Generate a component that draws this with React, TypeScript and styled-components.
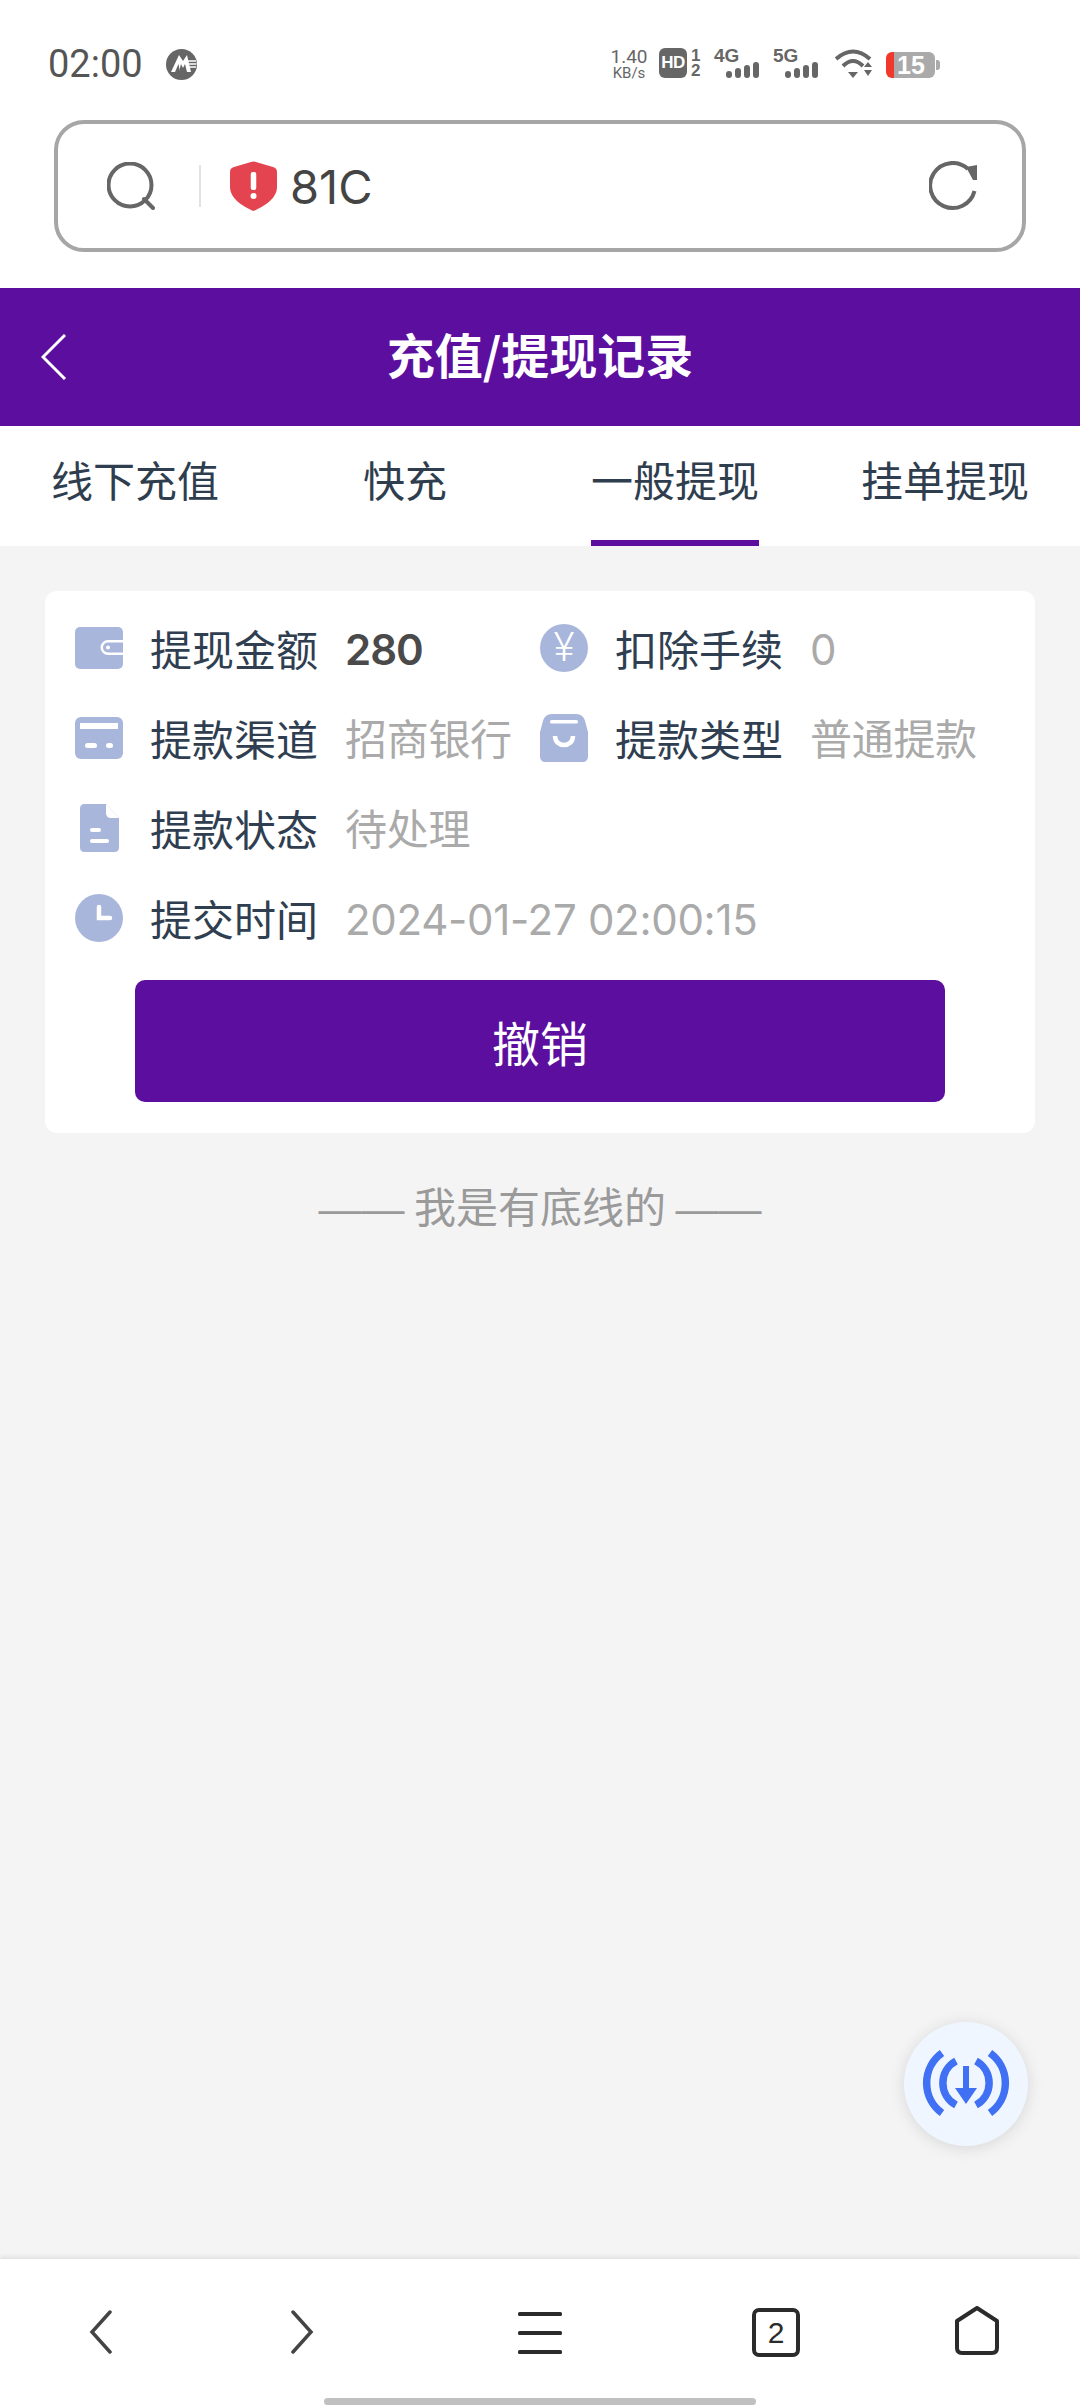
import styled, { createGlobalStyle } from 'styled-components';

const CJK = `"Noto Sans CJK SC", "Noto Sans", sans-serif`;
const NUM = `Inter, "Noto Sans CJK SC", sans-serif`;
const ICON_BLUE = '#a9b6dc';
const PURPLE = '#5c0f9e';

const GlobalStyle = createGlobalStyle`
  html, body {
    margin: 0;
    padding: 0;
    background: #f4f4f5;
  }
  * {
    box-sizing: border-box;
  }
`;

const Page = styled.div`
  width: 1080px;
  height: 2408px;
  display: flex;
  flex-direction: column;
  overflow: hidden;
  font-family: ${CJK};
`;

const StatusBar = styled.div`
  height: 120px;
  flex: none;
  background: #fff;
  padding: 48px 0 0 48px;
  display: flex;
  justify-content: space-between;
  align-items: flex-start;
`;

const StatusLeft = styled.div`
  display: flex;
  align-items: center;
  height: 32px;
  gap: 23px;
`;

const Clock = styled.span`
  font-family: Roboto, sans-serif;
  font-size: 38px;
  line-height: 32px;
  color: #555;
`;

const StatusRight = styled.div`
  display: flex;
  align-items: flex-start;
  height: 32px;
  width: 470px;
`;

const Speed = styled.div`
  width: 38px;
  display: flex;
  flex-direction: column;
  align-items: center;
  color: #666;
  font-family: Roboto, sans-serif;
  margin-right: 11px;
`;

const SpeedValue = styled.span`
  font-size: 19px;
  line-height: 18px;
`;

const SpeedUnit = styled.span`
  font-size: 15px;
  line-height: 14px;
`;

const HdBadge = styled.div`
  width: 28px;
  height: 30px;
  border-radius: 6px;
  background: #666;
  color: #fff;
  font: 700 17px/30px "Liberation Sans", sans-serif;
  letter-spacing: -0.5px;
  text-align: center;
`;

const SimSlots = styled.div`
  width: 11px;
  margin-left: 4px;
  color: #666;
  font: 700 17px/15px "Liberation Sans", sans-serif;
  display: flex;
  flex-direction: column;
`;

const Signal = styled.div`
  position: relative;
  width: 47px;
  height: 30px;
  margin-left: 12px;
`;

const SignalLabel = styled.span`
  position: absolute;
  left: 0;
  top: -1px;
  color: #666;
  font: 700 19px/18px "Liberation Sans", sans-serif;
`;

const SignalBars = styled.svg`
  position: absolute;
  left: 12px;
  top: 14px;
`;

const Battery = styled.div`
  position: relative;
  width: 49px;
  height: 26px;
  margin-top: 4px;
  margin-left: 14px;
  border-radius: 6px;
  background: linear-gradient(to right, #f0392b 8px, #aaa 8px);
  color: #fff;
  font: 700 25px/26px "Liberation Sans", sans-serif;
  padding-left: 11px;

  &::after {
    content: '';
    position: absolute;
    right: -5px;
    top: 8px;
    width: 4px;
    height: 10px;
    border-radius: 0 3px 3px 0;
    background: #aaa;
  }
`;

const AddressWrap = styled.div`
  height: 168px;
  flex: none;
  padding: 0 54px 36px;
  background: #fff;
`;

const AddressBar = styled.div`
  height: 132px;
  border: 4px solid #a6a6a6;
  border-radius: 30px;
  display: flex;
  align-items: center;
  padding-left: 49px;
  padding-right: 45px;
`;

const Divider = styled.div`
  width: 2px;
  height: 42px;
  margin: 0 29px 0 44px;
  background: #e2e2e2;
`;

const AddressText = styled.span`
  margin-left: 13px;
  padding-top: 2px;
  flex: 1;
  font-family: ${NUM};
  font-size: 47px;
  line-height: 50px;
  color: #444;
`;

const TitleBar = styled.header`
  position: relative;
  height: 138px;
  flex: none;
  padding-bottom: 9px;
  background: ${PURPLE};
  display: flex;
  align-items: center;
  justify-content: center;
  color: #fff;
`;

const BackLink = styled.svg`
  position: absolute;
  left: 41px;
  top: 46px;
`;

const Title = styled.h1`
  margin: 0;
  font-size: 48px;
  font-weight: 700;
  line-height: 60px;
`;

const Tabs = styled.nav`
  height: 120px;
  flex: none;
  background: #fff;
  display: grid;
  grid-template-columns: repeat(4, 270px);
`;

const Tab = styled.div`
  display: flex;
  justify-content: center;
  height: 120px;
`;

const TabLabel = styled.span<{ $active?: boolean }>`
  display: block;
  height: 120px;
  padding-top: 26px;
  font-size: 42px;
  line-height: 54px;
  color: #2f3e4e;
  border-bottom: 6px solid ${(p) => (p.$active ? PURPLE : 'transparent')};
`;

const Main = styled.main`
  position: relative;
  flex: 1;
  background: #f4f4f5;
  padding: 45px 45px 0;
`;

const Card = styled.section`
  background: #fff;
  border-radius: 12px;
  padding: 12px 30px 31px;
`;

const Fields = styled.div`
  display: grid;
  grid-template-columns: 465px 1fr;
  grid-auto-rows: 90px;
`;

const Field = styled.div<{ $wide?: boolean }>`
  display: flex;
  align-items: center;
  grid-column: ${(p) => (p.$wide ? '1 / -1' : 'auto')};
`;

const FieldIcon = styled.div`
  width: 48px;
  height: 48px;
  flex: none;
  display: flex;
  align-items: center;
  justify-content: center;
  margin-right: 27px;
`;

const YenIcon = styled.div`
  width: 48px;
  height: 48px;
  border-radius: 50%;
  background: ${ICON_BLUE};
  color: #fff;
  font: 300 40px/48px Roboto, sans-serif;
  text-align: center;
`;

const Label = styled.span`
  width: 168px;
  flex: none;
  font-size: 42px;
  line-height: 54px;
  color: #2f3e50;
`;

const Value = styled.span<{ $strong?: boolean }>`
  margin-left: 27px;
  padding-top: 3px;
  white-space: nowrap;
  font-family: ${NUM};
  font-size: 42px;
  line-height: 54px;
  letter-spacing: ${(p) => (p.$strong ? '-1px' : '-0.3px')};
  font-weight: ${(p) => (p.$strong ? 600 : 400)};
  color: ${(p) => (p.$strong ? '#4a4a4a' : '#aaa')};
`;

const CancelButton = styled.button`
  display: block;
  width: 810px;
  height: 122px;
  margin: 17px 0 0 60px;
  border: 0;
  border-radius: 10px;
  background: ${PURPLE};
  color: #fff;
  font-family: ${CJK};
  font-size: 48px;
`;

const EndNote = styled.p`
  margin: 44px 0 0;
  text-align: center;
  font-size: 42px;
  line-height: 56px;
  color: #9a9a9a;
`;

const Dash = styled.span`
  font-family: "Liberation Sans", sans-serif;
  font-size: 43px;
`;

const Fab = styled.div`
  position: absolute;
  right: 52px;
  bottom: 113px;
  width: 124px;
  height: 124px;
  border-radius: 50%;
  background: #f0f6ff;
  box-shadow: 0 2px 16px rgba(0, 0, 0, 0.12);
`;

const BottomBar = styled.footer`
  height: 149px;
  flex: none;
  background: #fff;
  box-shadow: 0 -2px 5px rgba(0, 0, 0, 0.09);
  position: relative;
  display: flex;
  flex-direction: column;
`;

const BottomIcons = styled.div`
  display: grid;
  grid-template-columns: 202px 200px 276px 196px 206px;
  height: 139px;
  padding-top: 51px;
  justify-items: center;
  align-items: start;
`;

const TabCount = styled.div`
  width: 48px;
  height: 49px;
  margin-top: -2px;
  border: 4px solid #2b2b2b;
  border-radius: 7px;
  color: #2b2b2b;
  font: 500 30px/41px "Liberation Sans", sans-serif;
  text-align: center;
`;

const HomeBar = styled.div`
  width: 432px;
  height: 7px;
  margin: 0 auto;
  border-radius: 4px;
  background: #c0c0c0;
`;

const BankLogo = () => (
  <svg width="31" height="31" viewBox="0 0 31 31">
    <circle cx="15.5" cy="15.5" r="15.5" fill="#666" />
    <path d="M5 23 L13 6 L17 12 L21 6 L25 23 H21 L19 15 L17 19 L15 15 L13 23 Z" fill="#fff" />
    <path d="M9 23 L12.5 15 L14 23 Z" fill="#666" />
    <path d="M22 12h8M23 15h7.5M23 18h7" stroke="#fff" strokeWidth="1.4" />
  </svg>
);

const Bars = () => (
  <SignalBars width="35" height="16" viewBox="0 0 35 16">
    <rect x="0" y="9" width="6" height="7" rx="3" fill="#666" />
    <rect x="9" y="6" width="6" height="10" rx="3" fill="#666" />
    <rect x="18" y="3" width="6" height="13" rx="3" fill="#666" />
    <rect x="27" y="0" width="6" height="16" rx="3" fill="#666" />
  </SignalBars>
);

const WifiIcon = () => (
  <svg width="37" height="30" viewBox="0 0 37 30" style={{ marginLeft: 15 }}>
    <path d="M1 11 Q18 -4 35 11" fill="none" stroke="#666" strokeWidth="4" />
    <path d="M8 18 Q18 8 28 18" fill="none" stroke="#666" strokeWidth="4" />
    <path d="M13 24 L23 24 L18 30 Z" fill="#666" />
    <path d="M29 19 L33 14 L37 19 Z M29 22 L37 22 L33 28 Z" fill="#666" />
  </svg>
);

const SearchIcon = () => (
  <svg width="48" height="48" viewBox="0 0 48 48" fill="none" stroke="#666" strokeWidth="4" strokeLinecap="round">
    <circle cx="23" cy="23" r="21.5" />
    <path d="M37 37 L46 46" />
  </svg>
);

const ShieldIcon = () => (
  <svg width="47" height="50" viewBox="0 0 47 50" style={{ flex: 'none' }}>
    <path
      d="M21 1 Q23.5 0 26 1 L43 6 Q47 7 47 11 V26 C47 38 33 46 23.5 50 C14 46 0 38 0 26 V11 Q0 7 4 6 Z"
      fill="#e3444f"
    />
    <rect x="20.75" y="11" width="5.5" height="18" rx="2" fill="#fff" />
    <circle cx="23.5" cy="35" r="3" fill="#fff" />
  </svg>
);

const RefreshIcon = () => (
  <svg width="48" height="50" viewBox="0 0 48 50" fill="none" stroke="#666" strokeWidth="4">
    <path d="M45.5 30 A22.5 22.5 0 1 1 39 8" />
    <path d="M37 6 L48 4 V19 H44 Z" fill="#666" stroke="none" />
  </svg>
);

const WalletIcon = () => (
  <svg width="48" height="42" viewBox="0 0 48 42">
    <rect width="48" height="42" rx="5" fill={ICON_BLUE} />
    <path d="M48 13 H33 A7.5 7.5 0 0 0 33 28 H48 Z" fill="#fff" />
    <path d="M48 15.5 H33 A5 5 0 0 0 33 25.5 H48 Z" fill={ICON_BLUE} />
    <circle cx="33" cy="20.5" r="2" fill="#fff" />
  </svg>
);

const CardIcon = () => (
  <svg width="48" height="42" viewBox="0 0 48 42">
    <rect width="48" height="42" rx="6" fill={ICON_BLUE} />
    <rect x="5" y="6" width="38" height="6" fill="#fff" />
    <rect x="10" y="26" width="12" height="5" rx="2.5" fill="#fff" />
    <rect x="31" y="26" width="7" height="5" rx="2.5" fill="#fff" />
  </svg>
);

const BagIcon = () => (
  <svg width="48" height="48" viewBox="0 0 48 48">
    <path
      d="M12 0 H36 C41 0 44 3 45 7 L48 18 V42 C48 46 46 48 42 48 H6 C2 48 0 46 0 42 V18 L3 7 C4 3 7 0 12 0 Z"
      fill={ICON_BLUE}
    />
    <rect x="10" y="6" width="28" height="3.5" rx="1.5" fill="#fff" />
    <path d="M15 22 C15 34 33 34 33 22" fill="none" stroke="#fff" strokeWidth="4.5" />
  </svg>
);

const FileIcon = () => (
  <svg width="39" height="48" viewBox="0 0 39 48">
    <path
      d="M4 0 H26 L39 14 V44 C39 46 37 48 35 48 H4 C2 48 0 46 0 44 V4 C0 2 2 0 4 0 Z"
      fill={ICON_BLUE}
    />
    <path d="M26 0 V9 C26 12 28 14 31 14 H39 Z" fill="#fff" />
    <rect x="10" y="24" width="11" height="4" rx="2" fill="#fff" />
    <rect x="10" y="35" width="19" height="4" rx="2" fill="#fff" />
  </svg>
);

const ClockIcon = () => (
  <svg width="48" height="48" viewBox="0 0 48 48">
    <circle cx="24" cy="24" r="24" fill={ICON_BLUE} />
    <path d="M24 13 V24 H35" fill="none" stroke="#fff" strokeWidth="4.5" strokeLinecap="round" />
  </svg>
);

const DownloadIcon = () => (
  <svg width="124" height="124" viewBox="0 0 124 124" fill="none" stroke="#4070f4" strokeWidth="7.5">
    <path d="M38 31 A37 37 0 0 0 38 91" />
    <path d="M86 31 A37 37 0 0 1 86 91" />
    <path d="M52 39 A25 25 0 0 0 52 83" />
    <path d="M72 39 A25 25 0 0 1 72 83" />
    <path d="M59 44 H65 V66 H73 L62 82 L51 66 H59 Z" fill="#4070f4" stroke="none" />
  </svg>
);

const Chevron = ({ flip }: { flip?: boolean }) => (
  <svg width="24" height="44" viewBox="0 0 24 44" fill="none" stroke="#444" strokeWidth="3.5" strokeLinecap="round">
    <path d={flip ? 'M3 2 L21 22 L3 42' : 'M21 2 L3 22 L21 42'} />
  </svg>
);

const MenuIcon = () => (
  <svg width="44" height="44" viewBox="0 0 44 44" fill="#2b2b2b">
    <rect x="0" y="2" width="44" height="4" rx="1.5" />
    <rect x="0" y="21" width="44" height="4" rx="1.5" />
    <rect x="0" y="40" width="44" height="4" rx="1.5" />
  </svg>
);

const HomeIcon = () => (
  <svg
    width="46"
    height="50"
    viewBox="0 0 46 50"
    fill="none"
    stroke="#2b2b2b"
    strokeWidth="4"
    strokeLinejoin="round"
    style={{ marginTop: -4 }}
  >
    <path d="M23 2 L43 15 V42 C43 46 41 47 38 47 H8 C5 47 3 46 3 42 V15 Z" />
  </svg>
);

const App = () => {
  return (
    <Page>
      <GlobalStyle />
      <StatusBar>
        <StatusLeft>
          <Clock>02:00</Clock>
          <BankLogo />
        </StatusLeft>
        <StatusRight>
          <Speed>
            <SpeedValue>1.40</SpeedValue>
            <SpeedUnit>KB/s</SpeedUnit>
          </Speed>
          <HdBadge>HD</HdBadge>
          <SimSlots>
            <span>1</span>
            <span>2</span>
          </SimSlots>
          <Signal>
            <SignalLabel>4G</SignalLabel>
            <Bars />
          </Signal>
          <Signal>
            <SignalLabel>5G</SignalLabel>
            <Bars />
          </Signal>
          <WifiIcon />
          <Battery>15</Battery>
        </StatusRight>
      </StatusBar>

      <AddressWrap>
        <AddressBar>
          <SearchIcon />
          <Divider />
          <ShieldIcon />
          <AddressText>81C</AddressText>
          <RefreshIcon />
        </AddressBar>
      </AddressWrap>

      <TitleBar>
        <BackLink width="26" height="46" viewBox="0 0 26 46" fill="none" stroke="#fff" strokeWidth="3">
          <path d="M24 1 L2 23 L24 45" />
        </BackLink>
        <Title>充值/提现记录</Title>
      </TitleBar>

      <Tabs>
        <Tab><TabLabel>线下充值</TabLabel></Tab>
        <Tab><TabLabel>快充</TabLabel></Tab>
        <Tab><TabLabel $active>一般提现</TabLabel></Tab>
        <Tab><TabLabel>挂单提现</TabLabel></Tab>
      </Tabs>

      <Main>
        <Card>
          <Fields>
            <Field>
              <FieldIcon><WalletIcon /></FieldIcon>
              <Label>提现金额</Label>
              <Value $strong>280</Value>
            </Field>
            <Field>
              <FieldIcon><YenIcon>¥</YenIcon></FieldIcon>
              <Label>扣除手续</Label>
              <Value>0</Value>
            </Field>
            <Field>
              <FieldIcon><CardIcon /></FieldIcon>
              <Label>提款渠道</Label>
              <Value>招商银行</Value>
            </Field>
            <Field>
              <FieldIcon><BagIcon /></FieldIcon>
              <Label>提款类型</Label>
              <Value>普通提款</Value>
            </Field>
            <Field $wide>
              <FieldIcon><FileIcon /></FieldIcon>
              <Label>提款状态</Label>
              <Value>待处理</Value>
            </Field>
            <Field $wide>
              <FieldIcon><ClockIcon /></FieldIcon>
              <Label>提交时间</Label>
              <Value>2024-01-27 02:00:15</Value>
            </Field>
          </Fields>
          <CancelButton>撤销</CancelButton>
        </Card>
        <EndNote>
          <Dash>——</Dash> 我是有底线的 <Dash>——</Dash>
        </EndNote>
        <Fab><DownloadIcon /></Fab>
      </Main>

      <BottomBar>
        <BottomIcons>
          <Chevron />
          <Chevron flip />
          <MenuIcon />
          <TabCount>2</TabCount>
          <HomeIcon />
        </BottomIcons>
        <HomeBar />
      </BottomBar>
    </Page>
  );
};

export default App;
